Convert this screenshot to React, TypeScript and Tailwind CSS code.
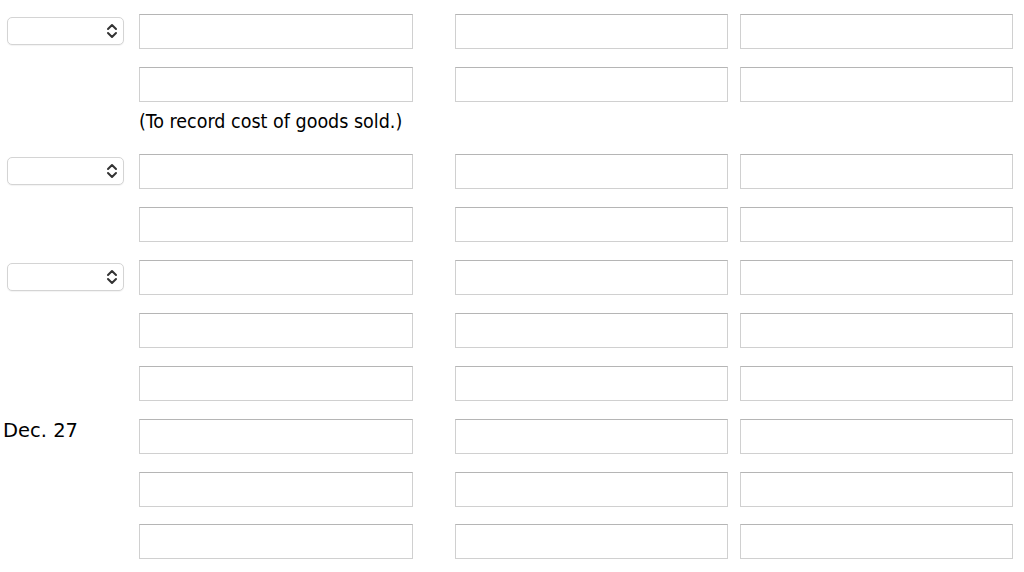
import React from "react";

const Input = () => (
  <div className="h-[35px] border border-[#d0d0d0] border-t-[#b5b5b5] bg-white" />
);

const Select = () => (
  <div className="mt-[3px] ml-[7px] h-[28px] w-[117px] rounded-[5px] border border-[#d4d4d4] bg-white flex items-center justify-end pr-[5px] shadow-[0_1px_1px_rgba(0,0,0,0.05)]">
    <svg width="12" height="18" viewBox="0 0 12 18" fill="none" stroke="#333" strokeWidth="2" strokeLinecap="round" strokeLinejoin="round">
      <path d="M2 7 L6 3 L10 7" />
      <path d="M2 11 L6 15 L10 11" />
    </svg>
  </div>
);

type RowProps = { left?: React.ReactNode; mb?: string };
const Row = ({ left, mb = "mb-[18px]" }: RowProps) => (
  <div className={`flex h-[35px] ${mb}`}>
    <div className="w-[139px] shrink-0">{left}</div>
    <div className="w-[274px] shrink-0"><Input /></div>
    <div className="w-[42px] shrink-0" />
    <div className="w-[273px] shrink-0"><Input /></div>
    <div className="w-[12px] shrink-0" />
    <div className="w-[273px] shrink-0"><Input /></div>
  </div>
);

export default function App() {
  return (
    <div className="w-[1024px] h-[572px] bg-white overflow-hidden pt-[14px]" style={{ fontFamily: "'DejaVu Sans', Verdana, sans-serif" }}>
      <Row left={<Select />} />
      <Row mb="mb-0" />
      <div className="h-[52px] pl-[139px] pt-[7px] text-[19.5px] leading-[26px] text-black" style={{ fontFamily: "'DejaVu Sans Condensed', 'DejaVu Sans', sans-serif" }}>
        (To record cost of goods sold.)
      </div>
      <Row left={<Select />} />
      <Row />
      <Row left={<Select />} />
      <Row />
      <Row />
      <Row left={<div className="pl-[3px] text-[19.5px] leading-[24px] text-black">Dec. 27</div>} />
      <Row mb="mb-[17px]" />
      <Row />
    </div>
  );
}
